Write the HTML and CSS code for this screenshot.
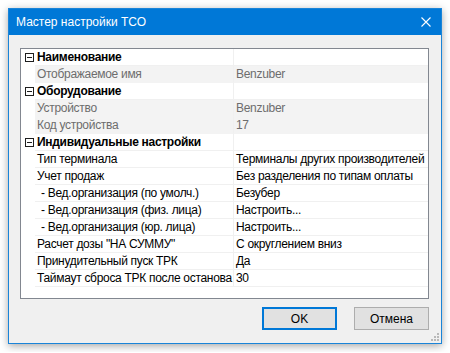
FILE: index.html
```html
<!DOCTYPE html>
<html lang="ru">
<head>
    <meta charset="UTF-8">
    <title>Мастер настройки ТСО</title>
    <link rel="stylesheet" href="styles.css">
</head>
<body>
    <div class="window">
        <div class="titlebar">
            <span class="title">Мастер настройки ТСО</span>
            <svg class="close" width="10" height="10" viewBox="0 0 10 10">
                <path d="M0.5 0.5 L9.5 9.5 M9.5 0.5 L0.5 9.5" stroke="#fff" stroke-width="1.1"/>
            </svg>
        </div>

        <div class="grid">
            <div class="row category"><span class="margin"><i class="toggle"></i></span><span class="name">Наименование</span><span class="value"></span></div>
            <div class="row disabled"><span class="margin"></span><span class="name">Отображаемое имя</span><span class="value">Benzuber</span></div>

            <div class="row category"><span class="margin"><i class="toggle"></i></span><span class="name">Оборудование</span><span class="value"></span></div>
            <div class="row disabled"><span class="margin"></span><span class="name">Устройство</span><span class="value">Benzuber</span></div>
            <div class="row disabled"><span class="margin"></span><span class="name">Код устройства</span><span class="value">17</span></div>

            <div class="row category"><span class="margin"><i class="toggle"></i></span><span class="name">Индивидуальные настройки</span><span class="value"></span></div>
            <div class="row"><span class="margin"></span><span class="name">Тип терминала</span><span class="value">Терминалы других производителей</span></div>
            <div class="row"><span class="margin"></span><span class="name">Учет продаж</span><span class="value">Без разделения по типам оплаты</span></div>
            <div class="row"><span class="margin"></span><span class="name sub">- Вед.организация (по умолч.)</span><span class="value">Безубер</span></div>
            <div class="row"><span class="margin"></span><span class="name sub">- Вед.организация (физ. лица)</span><span class="value">Настроить...</span></div>
            <div class="row"><span class="margin"></span><span class="name sub">- Вед.организация (юр. лица)</span><span class="value">Настроить...</span></div>
            <div class="row"><span class="margin"></span><span class="name">Расчет дозы "НА СУММУ"</span><span class="value">С округлением вниз</span></div>
            <div class="row"><span class="margin"></span><span class="name">Принудительный пуск ТРК</span><span class="value">Да</span></div>
            <div class="row"><span class="margin"></span><span class="name">Таймаут сброса ТРК после останова</span><span class="value">30</span></div>
        </div>

        <div class="buttons">
            <button class="button default">OK</button>
            <button class="button">Отмена</button>
        </div>

        <svg class="grip" width="8" height="8" viewBox="0 0 8 8">
            <rect x="6" y="0" width="2" height="2" fill="#b8b8b8"/>
            <rect x="3" y="3" width="2" height="2" fill="#b8b8b8"/>
            <rect x="6" y="3" width="2" height="2" fill="#b8b8b8"/>
            <rect x="0" y="6" width="2" height="2" fill="#b8b8b8"/>
            <rect x="3" y="6" width="2" height="2" fill="#b8b8b8"/>
            <rect x="6" y="6" width="2" height="2" fill="#b8b8b8"/>
        </svg>
    </div>
</body>
</html>
```

FILE: styles.css
```css
body {
    margin: 0;
    padding: 8px;
    background-color: #ffffff;
    font-family: "Liberation Sans", Arial, sans-serif;
    font-size: 12px;
}

.window {
    position: relative;
    width: 434px;
    height: 336px;
    box-sizing: border-box;
    border: 1px solid #1a84d8;
    background-color: #f0f0f0;
    box-shadow: 0 2px 8px rgba(0, 0, 0, 0.35);
    display: flex;
    flex-direction: column;
}

.titlebar {
    height: 26px;
    background-color: #0078d7;
    color: #ffffff;
    display: flex;
    align-items: center;
    justify-content: space-between;
    padding: 0 10px 0 7px;
}

.title {
    font-size: 12px;
}

.grid {
    margin: 13px 12px 0 11px;
    height: 251px;
    box-sizing: border-box;
    border: 1px solid #828790;
    background-color: #ffffff;
    letter-spacing: -0.3px;
}

.row {
    display: grid;
    grid-template-columns: 14px 199px 1fr;
    height: 17px;
    line-height: 16px;
}

.margin {
    display: flex;
    align-items: center;
    justify-content: center;
}

.name,
.value {
    border-bottom: 1px solid #f0f0f0;
    white-space: nowrap;
    overflow: hidden;
    padding-left: 2px;
}

.name {
    border-right: 1px solid #f0f0f0;
}

.sub {
    padding-left: 6px;
}

.category .name {
    font-weight: bold;
}

.disabled .name,
.disabled .value {
    background-color: #f3f3f3;
    color: #6d6d6d;
    border-bottom-color: #f3f3f3;
}

.toggle {
    position: relative;
    width: 7px;
    height: 7px;
    border: 1px solid #1e1e1e;
    margin-left: 3px;
}

.toggle::after {
    content: "";
    position: absolute;
    left: 1px;
    top: 3px;
    width: 5px;
    height: 1px;
    background-color: #1e1e1e;
}

.buttons {
    display: flex;
    justify-content: flex-end;
    gap: 17px;
    margin: 8px 12px 0 0;
}

.button {
    width: 75px;
    height: 23px;
    border: 1px solid #adadad;
    background-color: #e1e1e1;
    font-family: inherit;
    font-size: 12px;
    color: #000000;
    padding: 0;
}

.button.default {
    border: 2px solid #0078d7;
}

.grip {
    position: absolute;
    right: 2px;
    bottom: 2px;
}
```
